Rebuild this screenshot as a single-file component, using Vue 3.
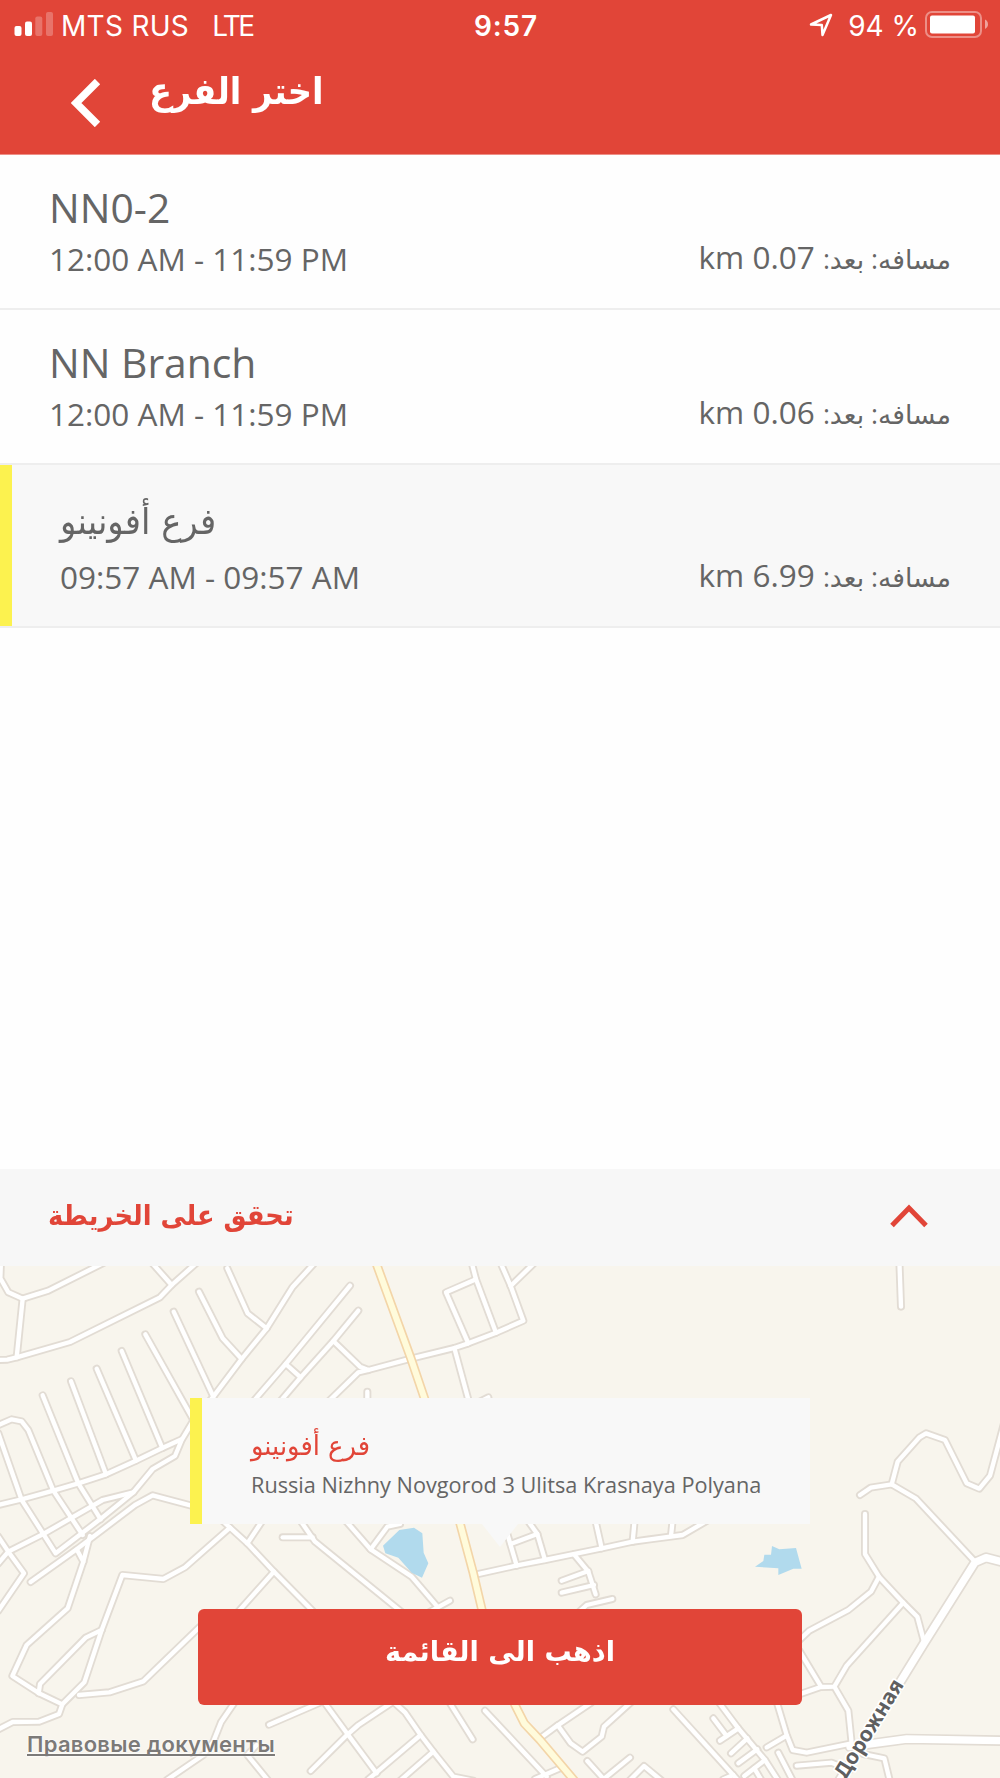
<template>
  <div class="screen">
    <header class="header">
      <div class="status-bar">
        <div class="status-left">
          <svg class="signal" width="40" height="26" viewBox="0 0 40 26">
            <rect x="0.5" y="14" width="7" height="10" rx="2" fill="#fff" />
            <rect x="11" y="9.5" width="7" height="14.5" rx="2" fill="#fff" />
            <rect x="21.3" y="4.5" width="7" height="19.5" rx="2" fill="#fff" opacity="0.25" />
            <rect x="32" y="0" width="7" height="24" rx="2" fill="#fff" opacity="0.25" />
          </svg>
          <span class="carrier">MTS RUS</span>
          <span class="network">LTE</span>
        </div>
        <span class="clock">9:57</span>
        <div class="status-right">
          <svg class="location" width="24" height="24" viewBox="0 0 24 24">
            <path d="M2 11.5 L22 2 L13.5 22 L12.8 12 Z" fill="none" stroke="#fff" stroke-width="2.5" stroke-linejoin="round" />
          </svg>
          <span class="percent">94 %</span>
          <svg class="battery" width="64" height="28" viewBox="0 0 64 28">
            <rect x="1" y="1" width="55" height="25" rx="6" fill="none" stroke="#fff" stroke-width="2" opacity="0.4" />
            <rect x="5" y="4.5" width="45" height="18" rx="2" fill="#fff" />
            <path d="M60 8.5 Q63 10 63 13.3 Q63 16.5 60 18 Z" fill="#fff" opacity="0.5" />
          </svg>
        </div>
      </div>
      <div class="nav-bar">
        <button class="back-button" aria-label="رجوع">
          <svg width="30" height="48" viewBox="0 0 30 48">
            <path d="M26.5 2.5 L5 24 L26.5 45.5" fill="none" stroke="#fff" stroke-width="7.6" />
          </svg>
        </button>
        <h1 class="title" dir="rtl">اختر الفرع</h1>
      </div>
    </header>

    <ul class="branch-list">
      <li
        v-for="branch in branches"
        :key="branch.name"
        class="branch"
        :class="{ selected: branch.id === selectedId }"
        @click="selectedId = branch.id"
      >
        <div class="branch-info">
          <span class="branch-name" :class="{ arabic: branch.arabic }">{{ branch.name }}</span>
          <span class="branch-hours">{{ branch.hours }}</span>
        </div>
        <span class="branch-distance" dir="rtl"><span class="distance-label">مسافه: بعد:</span> {{ branch.distance }} km</span>
      </li>
    </ul>

    <button class="map-toggle">
      <span class="map-toggle-text" dir="rtl">تحقق على الخريطة</span>
      <svg width="38" height="24" viewBox="0 0 38 24">
        <path d="M2 21.5 L19 4 L36 21.5" fill="none" stroke="#e14538" stroke-width="5" />
      </svg>
    </button>

    <section class="map">
      <svg class="map-canvas" viewBox="0 18 3000 1536" preserveAspectRatio="none">
        <g v-for="tile in tiles" :key="'case' + tile.x" :transform="`translate(${tile.x} 0)`" class="road-case">
          <polyline v-for="road in tile.roads" :key="road" :points="road" />
          <polyline v-for="road in tile.major" :key="road" :points="road" class="major" />
        </g>
        <g v-for="tile in tiles" :key="'fill' + tile.x" :transform="`translate(${tile.x} 0)`" class="road-fill">
          <polyline v-for="road in tile.roads" :key="road" :points="road" />
          <polyline v-for="road in tile.major" :key="road" :points="road" class="major" />
        </g>
        <polyline class="highway-case" :points="highway" />
        <polyline class="highway-fill" :points="highway" />
        <polygon v-for="lake in lakes" :key="lake" class="lake" :points="lake" />
        <text class="street" transform="translate(2713 1274) rotate(-58.5)">Дорожная</text>
      </svg>

      <div class="map-overlay">
        <div class="callout">
          <span class="callout-name" dir="rtl">فرع أفونينو</span>
          <span class="callout-address">Russia Nizhny Novgorod 3 Ulitsa Krasnaya Polyana</span>
        </div>
        <button class="menu-button"><span class="menu-button-text" dir="rtl">اذهب الى القائمة</span></button>
        <a class="legal">Правовые документы</a>
      </div>
    </section>
  </div>
</template>

<script setup>
import { ref } from 'vue';

const selectedId = ref(3);

const branches = [
  { id: 1, name: 'NN0-2', hours: '12:00 AM - 11:59 PM', distance: '0.07' },
  { id: 2, name: 'NN Branch', hours: '12:00 AM - 11:59 PM', distance: '0.06' },
  { id: 3, name: 'فرع أفونينو', hours: '09:57 AM - 09:57 AM', distance: '6.99', arabic: true }
];

// Roads are grouped by map tile, x is the tile offset
const tiles = [
  {
    x: 0,
    roads: [
      '3,0 1,55 25,97 68,116 145,92 320,4',
      '68,116 50,292',
      '-5,300 22,299 50,292 210,246 480,112 515,75 595,4',
      '450,2 515,75',
      '682,25 743,160 800,205',
      '597,95 668,235 725,297',
      '950,2 877,82 800,205 725,297 640,410 578,485 545,540 525,588 458,627 400,697 300,778 167,880 65,720 -5,520',
      '-5,735 65,718 160,692 235,670 318,643 408,602 487,564 545,538',
      '400,697 308,720 130,822 25,875 -5,910',
      '92,966 230,868 405,735 458,706 585,740',
      '521,155 640,410',
      '436,223 580,480',
      '365,273 487,564',
      '290,326 408,602',
      '213,364 318,643',
      '128,406 235,670 302,778',
      '-5,495 35,478 65,484 85,510 160,692 248,825',
      '-5,830 25,875 72,940 -5,1052',
      '270,828 250,905 203,1045 80,1155 37,1248 118,1300 187,1333',
      '230,868 250,905',
      '690,803 555,922 490,957 367,945 305,1110 253,1267 187,1333 177,1362 117,1385 38,1386 -5,1408',
      '305,1110 257,1133 120,1272 116,1300',
      '237,1305 328,1297 430,1264 600,1100',
      '822,935 710,1060',
      '665,780 690,803 742,850 822,935 945,1060',
      '742,850 792,775',
      '848,832 938,832',
      '705,1325 663,1387 640,1445 610,1485 500,1560',
      '770,1455 742,1485 805,1562',
      '807,1394 960,1328'
    ],
    major: []
  },
  {
    x: 900,
    roads: [
      '150,77 -43,312 -145,430',
      '-43,312 2,352',
      '175,152 100,243 2,352 -60,425',
      '100,243 180,320 205,330 333,296 463,264 505,250 588,218 670,182 632,78 598,0',
      '632,78 710,2',
      '205,330 175,337 85,425',
      '505,250 438,97 528,58',
      '513,0 528,58 588,218',
      '463,264 508,430',
      '202,395 202,430',
      '540,425 565,412',
      '0,780 45,845 310,1060',
      '135,780 212,868 335,950 412,1040',
      '212,868 262,800 300,792',
      '390,1055 450,1022',
      '530,943 648,917 735,900 905,865 998,845 1050,838 1148,825 1225,780',
      '620,815 650,917',
      '632,852 712,822',
      '682,780 712,822 735,900',
      '886,780 905,865',
      '1004,780 998,845',
      '1118,780 1113,828',
      '822,883 865,935 887,1003',
      '785,962 865,933',
      '785,998 882,975',
      '838,1055 860,1035 937,1017',
      '70,1323 143,1423 230,1540',
      '32,1533 143,1423 175,1395 280,1325',
      '285,1330 315,1357 362,1425 400,1475 460,1550 520,1562',
      '362,1425 205,1558',
      '400,1475 300,1562',
      '447,1325 518,1438',
      '555,1352 740,1550',
      '705,1557 780,1525',
      '720,1435 773,1396 875,1327',
      '773,1396 812,1450 848,1475 905,1430 912,1400 995,1325',
      '862,1503 912,1558',
      '990,1493 905,1562',
      '985,1565 1032,1518 1085,1562'
    ],
    major: []
  },
  {
    x: 1950,
    roads: [
      '748,0 753,140',
      '630,705 662,683 725,673 797,715 975,905',
      '725,673 743,605 808,532 828,520 885,540 950,670 988,686 1020,647 1062,490',
      '645,762 645,882 687,950 760,1028 802,1070 822,1145',
      '687,950 663,995 595,1050 478,1112 445,1143',
      '448,1172 512,1278',
      '445,1304 512,1281 553,1280 590,1217 760,1028',
      '553,1280 595,1352 605,1450',
      '605,1450 470,1478 428,1470 410,1425 380,1325',
      '350,1462 410,1427',
      '385,1478 430,1565',
      '440,1517 545,1508 600,1530',
      '640,1482 703,1495 720,1565',
      '70,1348 265,1562',
      '220,1558 250,1545',
      '205,1325 265,1405 345,1500 385,1562',
      '190,1375 230,1428',
      '210,1442 265,1405',
      '243,1480 292,1435',
      '265,1510 322,1468',
      '283,1548 345,1500',
      '313,1525 335,1562'
    ],
    major: [
      '1060,906 1008,893 975,907 822,1150 560,1575',
      '600,1460 770,1437 1060,1442'
    ]
  }
];

const highway = '1125,0 1233,296 1275,420 1380,790 1420,940 1446,1050 1545,1335 1573,1390 1620,1440 1730,1570';

const lakes = [
  '1149,857 1198,810 1242,803 1267,820 1271,878 1285,910 1266,953 1235,938 1195,893 1156,880',
  '2265,920 2290,903 2293,884 2313,884 2316,858 2338,868 2388,864 2405,926 2380,926 2335,945 2335,925'
];
</script>

<style>
body {
  margin: 0;
  background: #fff;
}
</style>

<style scoped>
.screen {
  width: 1000px;
  height: 1778px;
  display: flex;
  flex-direction: column;
  overflow: hidden;
  background: #fefefe;
  color: #656565;
  font-family: 'Open Sans', 'DejaVu Sans', sans-serif;
}

button {
  border: none;
  padding: 0;
  background: none;
  font-family: inherit;
  cursor: pointer;
}

svg {
  display: block;
  flex-shrink: 0;
}

.header {
  height: 155px;
  flex-shrink: 0;
  background: #e14538;
  border-bottom: 1px solid #ee8f87;
  box-sizing: border-box;
  color: #fff;
}

.status-bar {
  height: 50px;
  display: grid;
  grid-template-columns: 1fr auto 1fr;
  align-items: center;
  font-family: 'Inter', sans-serif;
  font-size: 28px;
  line-height: 34px;
  box-sizing: border-box;
  padding: 0 11px 0 14px;
}

.status-left,
.status-right {
  display: flex;
  align-items: center;
}

.status-right {
  justify-content: flex-end;
}

.signal {
  margin-right: 7px;
}

.carrier {
  letter-spacing: 0.3px;
  padding-top: 2px;
}

.network {
  margin-left: 23px;
  letter-spacing: -2.6px;
  padding-top: 2px;
}

.clock {
  font-weight: 600;
  letter-spacing: 0.9px;
  margin-left: 9px;
  padding-top: 2px;
}

.location {
  margin-right: 15px;
}

.percent {
  margin-right: 6px;
  padding-top: 2px;
}

.nav-bar {
  display: flex;
  align-items: flex-start;
  padding-left: 71px;
}

.back-button {
  margin-top: 29px;
}

.title {
  margin: 17px 0 0 48px;
  font-size: 37px;
  line-height: 50px;
  font-weight: 700;
  font-family: 'DejaVu Sans', sans-serif;
  transform: scaleX(0.91);
  transform-origin: left center;
}

.branch-list {
  flex: 1;
  margin: 0;
  padding: 0;
  list-style: none;
}

.branch {
  height: 155px;
  display: flex;
  justify-content: space-between;
  align-items: flex-end;
  box-sizing: border-box;
  padding: 0 49px 28px;
  border-bottom: 2px solid #eeeeee;
}

.branch.selected {
  height: 163px;
  background: #f8f8f8;
  position: relative;
  padding-left: 60px;
}

.branch.selected::before {
  content: '';
  position: absolute;
  left: 0;
  top: 0;
  bottom: 0;
  width: 12px;
  background: #fcf24f;
}

.branch-info {
  display: flex;
  flex-direction: column;
  align-items: flex-start;
  gap: 4px;
}

.branch-name {
  font-size: 40.8px;
  line-height: 54px;
}

.branch-name.arabic {
  font-family: 'DejaVu Sans', sans-serif;
  font-size: 36px;
  padding-bottom: 3px;
  transform: scaleX(0.94);
  transform-origin: left center;
}

.branch-hours {
  font-size: 31.5px;
  line-height: 42px;
}

.branch-distance {
  font-size: 31.5px;
  line-height: 42px;
  white-space: nowrap;
}

.distance-label {
  font-size: 26.6px;
}

.map-toggle {
  height: 97px;
  flex-shrink: 0;
  display: flex;
  justify-content: space-between;
  align-items: center;
  padding: 0 72px 4px 48px;
  background: #f7f7f7;
}

.map-toggle-text {
  color: #e14538;
  font-family: 'DejaVu Sans', sans-serif;
  font-weight: 700;
  font-size: 28px;
  transform: scaleX(0.92);
  transform-origin: left center;
}

.map {
  height: 512px;
  flex-shrink: 0;
  position: relative;
  background: #f8f5ed;
}

.map-canvas {
  width: 1000px;
  height: 512px;
}

.road-case,
.road-fill,
.highway-case,
.highway-fill {
  fill: none;
  stroke-linecap: round;
  stroke-linejoin: round;
}

.road-case {
  stroke: #e2dcd4;
  stroke-width: 24px;
}

.road-fill {
  stroke: #fff;
  stroke-width: 13px;
}

.road-case .major {
  stroke-width: 32px;
}

.road-fill .major {
  stroke-width: 22px;
}

.highway-case {
  stroke: #f3d5a8;
  stroke-width: 28px;
}

.highway-fill {
  stroke: #fffbdb;
  stroke-width: 18px;
}

.lake {
  fill: #b1daed;
}

.street {
  font-family: 'Noto Sans', sans-serif;
  font-weight: 700;
  font-size: 63px;
  fill: #5f5f61;
  stroke: #fff;
  stroke-width: 10px;
  stroke-linejoin: round;
  paint-order: stroke;
  text-anchor: end;
}

.map-overlay {
  position: absolute;
  inset: 0;
  display: flex;
  flex-direction: column;
  align-items: center;
  padding-top: 132px;
}

.callout {
  position: relative;
  width: 620px;
  height: 126px;
  box-sizing: border-box;
  display: flex;
  flex-direction: column;
  align-items: flex-start;
  padding: 30px 0 0 49px;
  border-left: 12px solid #fcf24f;
  background: #f8f8f8;
}

.callout::after {
  content: '';
  position: absolute;
  left: 280px;
  top: 126px;
  border: 18px solid transparent;
  border-top: 23px solid #f8f8f8;
  border-bottom: none;
}

.callout-name {
  color: #e14538;
  font-family: 'DejaVu Sans', sans-serif;
  font-size: 27px;
  line-height: 36px;
  transform: scaleX(0.955);
  transform-origin: left center;
}

.callout-address {
  font-size: 21.7px;
  line-height: 30px;
  margin-top: 6px;
}

.menu-button {
  width: 604px;
  height: 96px;
  margin-top: 85px;
  padding-bottom: 11px;
  border-radius: 6px;
  background: #e14538;
  color: #fff;
}

.menu-button-text {
  display: inline-block;
  font-family: 'DejaVu Sans', sans-serif;
  font-size: 28px;
  font-weight: 700;
  transform: scaleX(0.966);
}

.legal {
  align-self: flex-start;
  margin: 26px 0 0 27px;
  font-family: 'Inter', sans-serif;
  font-size: 22px;
  line-height: 27px;
  font-weight: 600;
  letter-spacing: 0.27px;
  color: #7c7a78;
  text-decoration: underline;
  text-decoration-skip-ink: none;
  text-underline-offset: 2px;
  text-shadow: 0 0 2px #fff, 0 0 2px #fff;
}
</style>
